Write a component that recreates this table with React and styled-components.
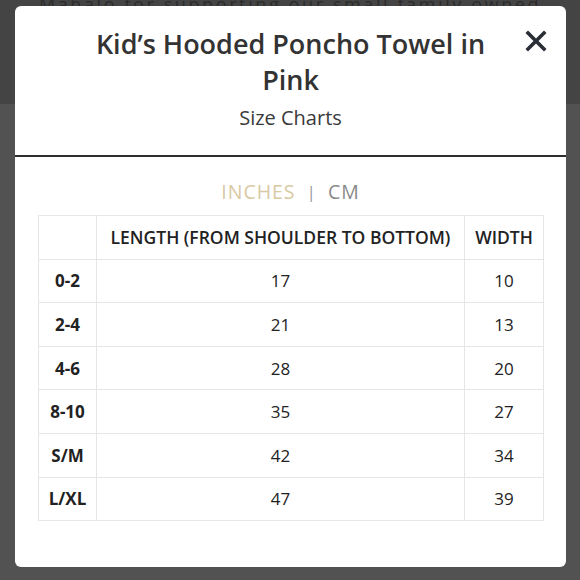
import React from 'react';
import styled, { createGlobalStyle } from 'styled-components';

const GlobalStyle = createGlobalStyle`
  html, body {
    margin: 0;
    padding: 0;
    background: #525252;
  }
  * {
    box-sizing: border-box;
  }
`;

const Page = styled.div`
  position: relative;
  width: 580px;
  height: 580px;
  overflow: hidden;
  background: #525252;
  font-family: "Open Sans", "Noto Sans", sans-serif;
`;

const Band = styled.div`
  height: 104px;
  background: #444444;
  display: flex;
  justify-content: center;
`;

const BandText = styled.div`
  margin-top: -8px;
  font-size: 18px;
  letter-spacing: 2.6px;
  color: #2c2c2c;
  white-space: nowrap;
`;

const Modal = styled.div`
  position: absolute;
  top: 6px;
  left: 15px;
  width: 551px;
  height: 561px;
  background: #fff;
  border-radius: 6px;
  display: flex;
  flex-direction: column;
`;

const Header = styled.div`
  padding: 20px 70px 0;
  text-align: center;
  color: #333;
`;

const Title = styled.h1`
  margin: 0;
  font-size: 27px;
  line-height: 36px;
  font-weight: 600;
  color: #333;
`;

const Subtitle = styled.div`
  margin-top: 6px;
  font-size: 20px;
  line-height: 28px;
  color: #3a3a3a;
`;

const Close = styled.button`
  position: absolute;
  top: 23px;
  right: 18px;
  width: 24px;
  height: 24px;
  padding: 0;
  border: 0;
  background: none;
  cursor: pointer;
  display: flex;
  align-items: center;
  justify-content: center;
`;

const Divider = styled.div`
  margin-top: 23px;
  height: 2px;
  background: #2e2e2e;
`;

const Body = styled.div`
  padding: 22px 23px 0;
`;

const Units = styled.div`
  display: flex;
  justify-content: center;
  align-items: center;
  gap: 11px;
  font-size: 19.5px;
  line-height: 26px;
  letter-spacing: 1px;
`;

const Unit = styled.span`
  color: ${p => (p.active ? '#d8c9a3' : '#8a8a8a')};
`;

const Sep = styled.span`
  color: #999;
  font-size: 17px;
`;

const Table = styled.table`
  margin-top: 10px;
  width: 505px;
  border-collapse: collapse;
  table-layout: fixed;
  color: #222;
`;

const Cell = styled.td`
  height: 43.6px;
  border: 1.5px solid #e6e6e6;
  text-align: center;
  vertical-align: middle;
  padding: 0;
  font-size: 17px;
  font-weight: ${p => (p.bold ? 700 : 400)};
`;

const HeadCell = styled(Cell).attrs({ as: 'th' })`
  font-weight: 600;
  font-size: 17.5px;
`;

const rows = [
  ['0-2', 17, 10],
  ['2-4', 21, 13],
  ['4-6', 28, 20],
  ['8-10', 35, 27],
  ['S/M', 42, 34],
  ['L/XL', 47, 39],
];

const CloseIcon = () => (
  <svg width="22" height="22" viewBox="0 0 22 22">
    <path d="M3 3L19 19M19 3L3 19" stroke="#2a2e36" strokeWidth="3.6" strokeLinecap="square" />
  </svg>
);

export default function App() {
  return (
    <Page>
      <GlobalStyle />
      <Band>
        <BandText>Mahalo for supporting our small family owned</BandText>
      </Band>
      <Modal>
        <Close aria-label="Close"><CloseIcon /></Close>
        <Header>
          <Title>Kid’s Hooded Poncho Towel in Pink</Title>
          <Subtitle>Size Charts</Subtitle>
        </Header>
        <Divider />
        <Body>
          <Units>
            <Unit active>INCHES</Unit>
            <Sep>|</Sep>
            <Unit>CM</Unit>
          </Units>
          <Table>
            <colgroup>
              <col style={{ width: 58 }} />
              <col style={{ width: 368 }} />
              <col style={{ width: 79 }} />
            </colgroup>
            <thead>
              <tr>
                <HeadCell />
                <HeadCell>LENGTH (FROM SHOULDER TO BOTTOM)</HeadCell>
                <HeadCell>WIDTH</HeadCell>
              </tr>
            </thead>
            <tbody>
              {rows.map(r => (
                <tr key={r[0]}>
                  <Cell bold>{r[0]}</Cell>
                  <Cell>{r[1]}</Cell>
                  <Cell>{r[2]}</Cell>
                </tr>
              ))}
            </tbody>
          </Table>
        </Body>
      </Modal>
    </Page>
  );
}
